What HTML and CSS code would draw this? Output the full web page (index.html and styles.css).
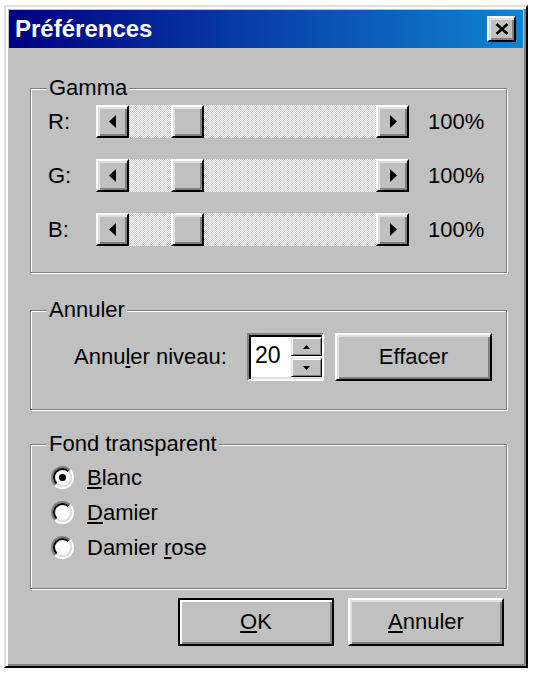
FILE: index.html
```html
<!DOCTYPE html>
<html lang="fr">
<head>
<meta charset="utf-8">
<title>Préférences</title>
<link rel="stylesheet" href="styles.css">
</head>
<body>
<div class="window">
  <div class="titlebar">
    <span class="title">Préférences</span>
    <span class="close raised">
      <svg width="14" height="12" viewBox="0 0 14 12"><path d="M1.5 1 L12.5 11 M12.5 1 L1.5 11" stroke="#000" stroke-width="2.6" fill="none"/></svg>
    </span>
  </div>
  <div class="body">
    <div class="group gamma">
      <div class="legend">Gamma</div>
      <div class="rows">
        <div class="slider-row">
          <span class="slabel">R:</span>
          <div class="scrollbar">
            <span class="sbtn raised"><svg width="8" height="13" viewBox="0 0 8 13"><polygon points="7,0 0,6.5 7,13" fill="#000"/></svg></span>
            <div class="track"><span class="thumb raised"></span></div>
            <span class="sbtn raised"><svg width="8" height="13" viewBox="0 0 8 13"><polygon points="1,0 8,6.5 1,13" fill="#000"/></svg></span>
          </div>
          <span class="pct">100%</span>
        </div>
        <div class="slider-row">
          <span class="slabel">G:</span>
          <div class="scrollbar">
            <span class="sbtn raised"><svg width="8" height="13" viewBox="0 0 8 13"><polygon points="7,0 0,6.5 7,13" fill="#000"/></svg></span>
            <div class="track"><span class="thumb raised"></span></div>
            <span class="sbtn raised"><svg width="8" height="13" viewBox="0 0 8 13"><polygon points="1,0 8,6.5 1,13" fill="#000"/></svg></span>
          </div>
          <span class="pct">100%</span>
        </div>
        <div class="slider-row">
          <span class="slabel">B:</span>
          <div class="scrollbar">
            <span class="sbtn raised"><svg width="8" height="13" viewBox="0 0 8 13"><polygon points="7,0 0,6.5 7,13" fill="#000"/></svg></span>
            <div class="track"><span class="thumb raised"></span></div>
            <span class="sbtn raised"><svg width="8" height="13" viewBox="0 0 8 13"><polygon points="1,0 8,6.5 1,13" fill="#000"/></svg></span>
          </div>
          <span class="pct">100%</span>
        </div>
      </div>
    </div>

    <div class="group undo">
      <div class="legend">Annuler</div>
      <div class="undo-row">
        <span class="undo-label">Annu<u>l</u>er niveau:</span>
        <div class="spin-edit">
          <span class="spin-value">20</span>
          <div class="spin-col">
            <span class="spin-btn raised-thin"><svg width="7" height="4" viewBox="0 0 7 4"><polygon points="0,4 3.5,0 7,4" fill="#000"/></svg></span>
            <span class="spin-btn raised-thin"><svg width="7" height="4" viewBox="0 0 7 4"><polygon points="0,0 3.5,4 7,0" fill="#000"/></svg></span>
          </div>
        </div>
        <span class="btn raised effacer">Effacer</span>
      </div>
    </div>

    <div class="group fond">
      <div class="legend">Fond transparent</div>
      <div class="radios">
        <div class="radio-row">
          <span class="radio"><span class="radio-in"><span class="dot"></span></span></span>
          <span><u>B</u>lanc</span>
        </div>
        <div class="radio-row">
          <span class="radio"><span class="radio-in"></span></span>
          <span><u>D</u>amier</span>
        </div>
        <div class="radio-row">
          <span class="radio"><span class="radio-in"></span></span>
          <span>Damier <u>r</u>ose</span>
        </div>
      </div>
    </div>

    <div class="actions">
      <span class="btn default">
        <span><u>O</u>K</span>
      </span>
      <span class="btn raised"><span><u>A</u>nnuler</span></span>
    </div>
  </div>
</div>
</body>
</html>
```

FILE: styles.css
```css
* { box-sizing: border-box; }

body {
  margin: 0;
  background: #fff;
  font-family: "Liberation Sans", Arial, sans-serif;
  font-size: 22px;
  color: #000;
}

u { text-decoration-thickness: 2px; text-underline-offset: 2px; }

.window {
  width: 524px;
  margin: 5px 0 0 4px;
  background: #c0c0c0;
  border: 2px solid;
  border-color: #dfdfdf #000 #000 #dfdfdf;
  padding: 3px;
  box-shadow: inset 2px 2px #fff, inset -2px -2px #808080;
}

.titlebar {
  height: 38px;
  display: flex;
  align-items: center;
  justify-content: space-between;
  padding: 0 7px 0 6px;
  background: linear-gradient(90deg, #000080, #1084d0);
}

.title {
  color: #fff;
  font-weight: bold;
  font-size: 24px;
}

.raised {
  background: #c0c0c0;
  border: 2px solid;
  border-color: #fff #000 #000 #fff;
  box-shadow: inset 2px 2px #dfdfdf, inset -2px -2px #808080;
}

.raised-thin {
  background: #c0c0c0;
  border: 1px solid;
  border-color: #dfdfdf #000 #000 #dfdfdf;
  box-shadow: inset 1px 1px #fff, inset -1px -1px #808080;
}

.close {
  width: 29px;
  height: 26px;
  display: flex;
  align-items: center;
  justify-content: center;
}

.body {
  padding: 40px 16px 17px 21px;
  display: flex;
  flex-direction: column;
}

.group {
  border: 1px solid #808080;
  box-shadow: inset 1px 1px #fff, 1px 1px #fff;
  display: flex;
  flex-direction: column;
}

.legend {
  align-self: flex-start;
  margin: -13px 0 0 16px;
  padding: 0 2px;
  background: #c0c0c0;
  line-height: 24px;
}

/* Gamma */
.gamma { padding: 0 0 26px 0; }

.rows {
  display: flex;
  flex-direction: column;
  gap: 21px;
  margin-top: 5px;
  padding-left: 17px;
}

.slider-row {
  display: flex;
  align-items: center;
  height: 33px;
}

.slabel { width: 48px; }

.scrollbar {
  display: flex;
  width: 313px;
  height: 33px;
}

.sbtn {
  width: 33px;
  height: 33px;
  flex: none;
  display: flex;
  align-items: center;
  justify-content: center;
}

.track {
  flex: 1;
  display: flex;
  background: repeating-conic-gradient(#c8c8c8 0 25%, #fff 0 50%) 0 0 / 2px 2px;
}

.thumb {
  width: 33px;
  height: 33px;
  margin-left: 42px;
}

.pct { margin-left: 19px; }

/* Annuler */
.undo {
  margin-top: 37px;
  padding: 0 0 28px 0;
}

.undo-row {
  display: flex;
  align-items: center;
  margin-top: 11px;
  padding-left: 43px;
}

.spin-edit {
  width: 77px;
  height: 48px;
  margin-left: 20px;
  display: flex;
  padding: 2px 0 2px 6px;
  background: #fff;
  border: 2px solid;
  border-color: #808080 #fff #fff #808080;
  box-shadow: inset 2px 2px #000, inset -2px -2px #dfdfdf;
}

.spin-value {
  align-self: center;
  font-size: 23px;
  margin-top: -4px;
}

.spin-col {
  margin-left: auto;
  width: 31px;
  display: flex;
  flex-direction: column;
  gap: 2px;
}

.spin-btn {
  flex: 1;
  display: flex;
  align-items: center;
  justify-content: center;
}

.btn {
  height: 48px;
  display: flex;
  align-items: center;
  justify-content: center;
}

.effacer {
  width: 157px;
  margin-left: 11px;
}

/* Fond transparent */
.fond {
  margin-top: 34px;
  padding: 0 0 23px 0;
}

.radios {
  display: flex;
  flex-direction: column;
  margin-top: 4px;
  padding-left: 20px;
}

.radio-row {
  display: flex;
  align-items: center;
  height: 35px;
}

.radio {
  width: 23px;
  height: 23px;
  margin-right: 13px;
  border-radius: 50%;
  border: 2px solid;
  border-color: #808080 #fff #fff #808080;
  display: flex;
}

.radio-in {
  flex: 1;
  border-radius: 50%;
  border: 2px solid;
  border-color: #000 #dfdfdf #dfdfdf #000;
  background: #fff;
  display: flex;
  align-items: center;
  justify-content: center;
}

.dot {
  width: 7px;
  height: 7px;
  border-radius: 50%;
  background: #000;
}

/* Buttons */
.actions {
  display: flex;
  justify-content: flex-end;
  gap: 14px;
  margin-top: 9px;
  padding-right: 3px;
}

.actions .btn { width: 156px; }

.default {
  background: #c0c0c0;
  border: 2px solid #000;
  box-shadow: inset 2px 2px #fff, inset -2px -2px #808080;
}
```
